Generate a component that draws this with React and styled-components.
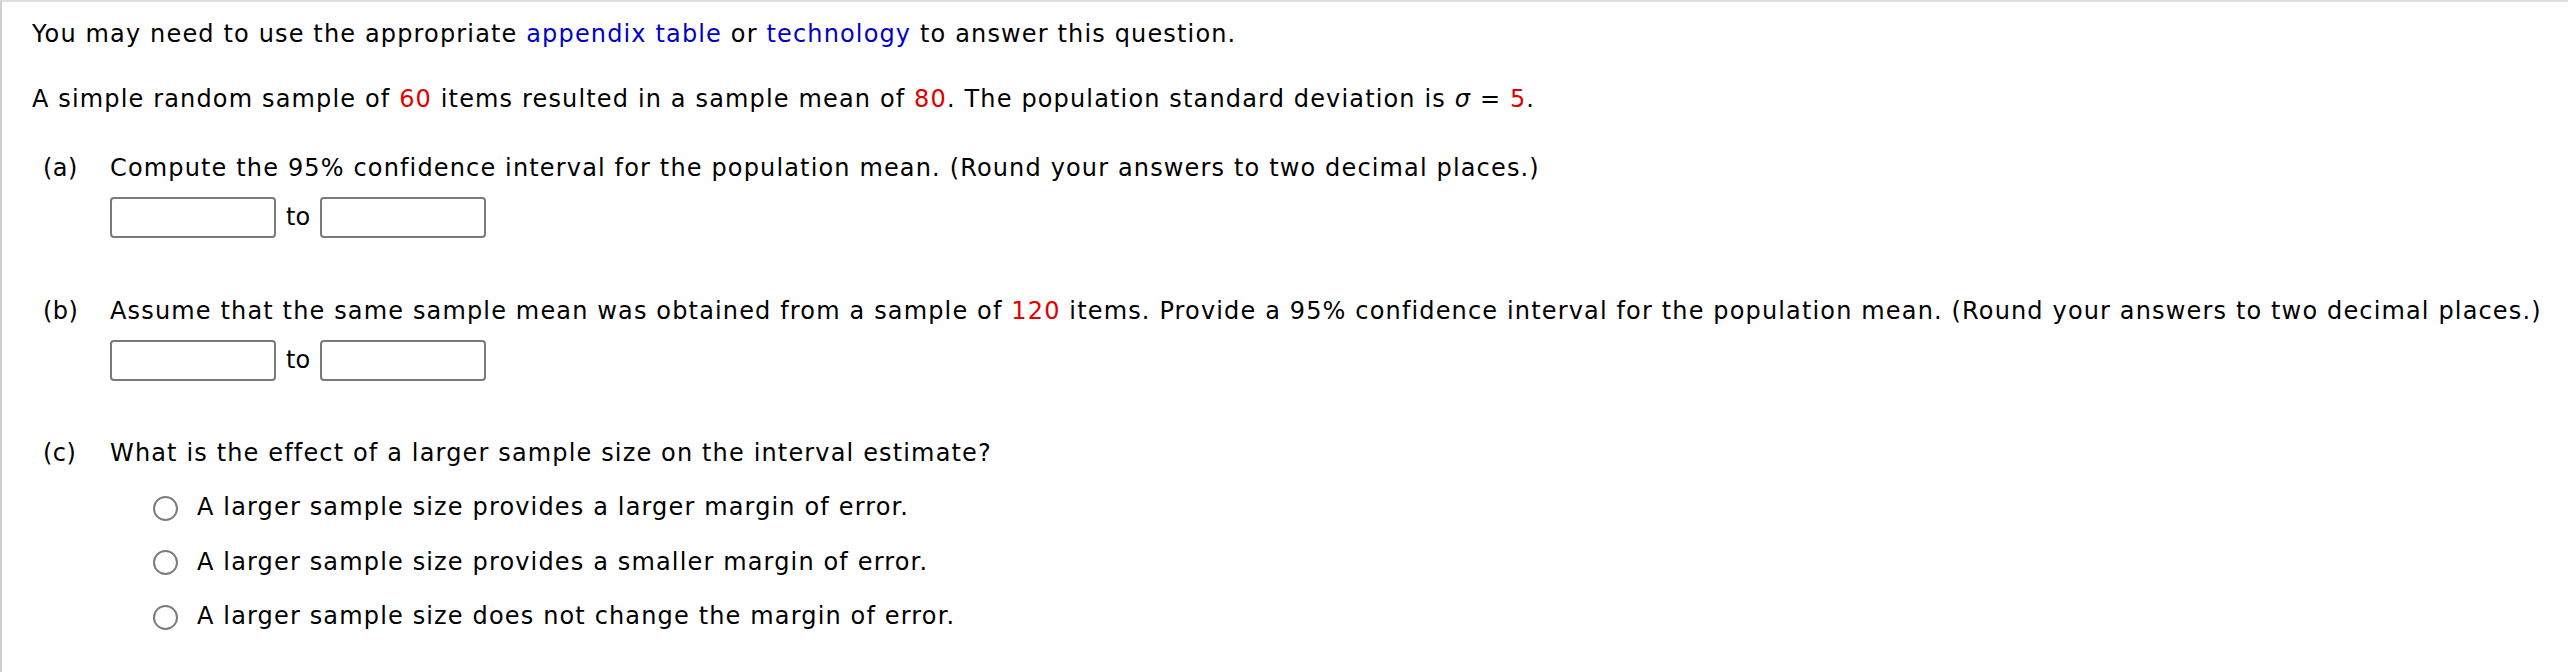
import React from "react"
import styled, { createGlobalStyle } from "styled-components"

const GlobalStyle = createGlobalStyle`
  html, body {
    margin: 0;
    padding: 0;
    background: #fff;
  }
  body {
    font-family: "DejaVu Sans", Verdana, sans-serif;
    font-size: 24px;
    letter-spacing: 1.15px;
    color: #000;
  }
`

const Frame = styled.div`
  border-top: 2px solid #dedede;
  border-left: 2px solid #cfcfcf;
  padding: 15px 0 40px 30px;
  min-height: 620px;
`

const Line = styled.p`
  margin: 0 0 ${({ gap }) => gap || 0}px 0;
  line-height: 34px;
  white-space: nowrap;
`

const Link = styled.span`
  color: #0000cc;
`

const Given = styled.span`
  color: #e00000;
`

const Part = styled.div`
  display: grid;
  grid-template-columns: 67px 1fr;
  padding-left: 11px;
  margin-top: ${({ top }) => top}px;
`

const Label = styled.span`
  line-height: 34px;
  letter-spacing: 0.5px;
`

const Body = styled.div`
  display: flex;
  flex-direction: column;
`

const AnswerRow = styled.div`
  display: flex;
  align-items: center;
  gap: 10px;
  margin-top: 12px;
`

const Field = styled.input`
  box-sizing: border-box;
  width: 166px;
  height: 41px;
  border: 2px solid #7a7a7a;
  border-radius: 4px;
  background: #fff;
  font: inherit;
  padding: 0 6px;
  outline: none;
`

const Joiner = styled.span`
  line-height: 34px;
  padding-bottom: 2px;
  letter-spacing: 0;
`

const Options = styled.div`
  display: flex;
  flex-direction: column;
  gap: 20.5px;
  margin-top: 20px;
  padding-left: 43px;
`

const Option = styled.label`
  display: flex;
  align-items: center;
  gap: 19px;
  line-height: 34px;
  white-space: nowrap;
`

const Radio = styled.span`
  box-sizing: border-box;
  width: 25px;
  height: 25px;
  border: 2px solid #7c7c7c;
  border-radius: 50%;
  background: #fff;
  flex: none;
  margin-top: 2px;
`

const Interval = () => (
  <AnswerRow>
    <Field type="text" />
    <Joiner>to</Joiner>
    <Field type="text" />
  </AnswerRow>
)

const choices = [
  "A larger sample size provides a larger margin of error.",
  "A larger sample size provides a smaller margin of error.",
  "A larger sample size does not change the margin of error.",
]

export default function App() {
  return (
    <>
      <GlobalStyle />
      <Frame>
        <Line gap={31}>
          You may need to use the appropriate <Link>appendix table</Link> or{" "}
          <Link>technology</Link> to answer this question.
        </Line>
        <Line>
          A simple random sample of <Given>60</Given> items resulted in a sample
          mean of <Given>80</Given>. The population standard deviation is{" "}
          <i>σ</i> = <Given>5</Given>.
        </Line>

        <Part top={35}>
          <Label>(a)</Label>
          <Body>
            <Line>
              Compute the 95% confidence interval for the population mean.
              (Round your answers to two decimal places.)
            </Line>
            <Interval />
          </Body>
        </Part>

        <Part top={56}>
          <Label>(b)</Label>
          <Body>
            <Line>
              Assume that the same sample mean was obtained from a sample of{" "}
              <Given>120</Given> items. Provide a 95% confidence interval for
              the population mean. (Round your answers to two decimal places.)
            </Line>
            <Interval />
          </Body>
        </Part>

        <Part top={55}>
          <Label>(c)</Label>
          <Body>
            <Line>What is the effect of a larger sample size on the interval estimate?</Line>
            <Options>
              {choices.map((c) => (
                <Option key={c}>
                  <Radio />
                  {c}
                </Option>
              ))}
            </Options>
          </Body>
        </Part>
      </Frame>
    </>
  )
}
